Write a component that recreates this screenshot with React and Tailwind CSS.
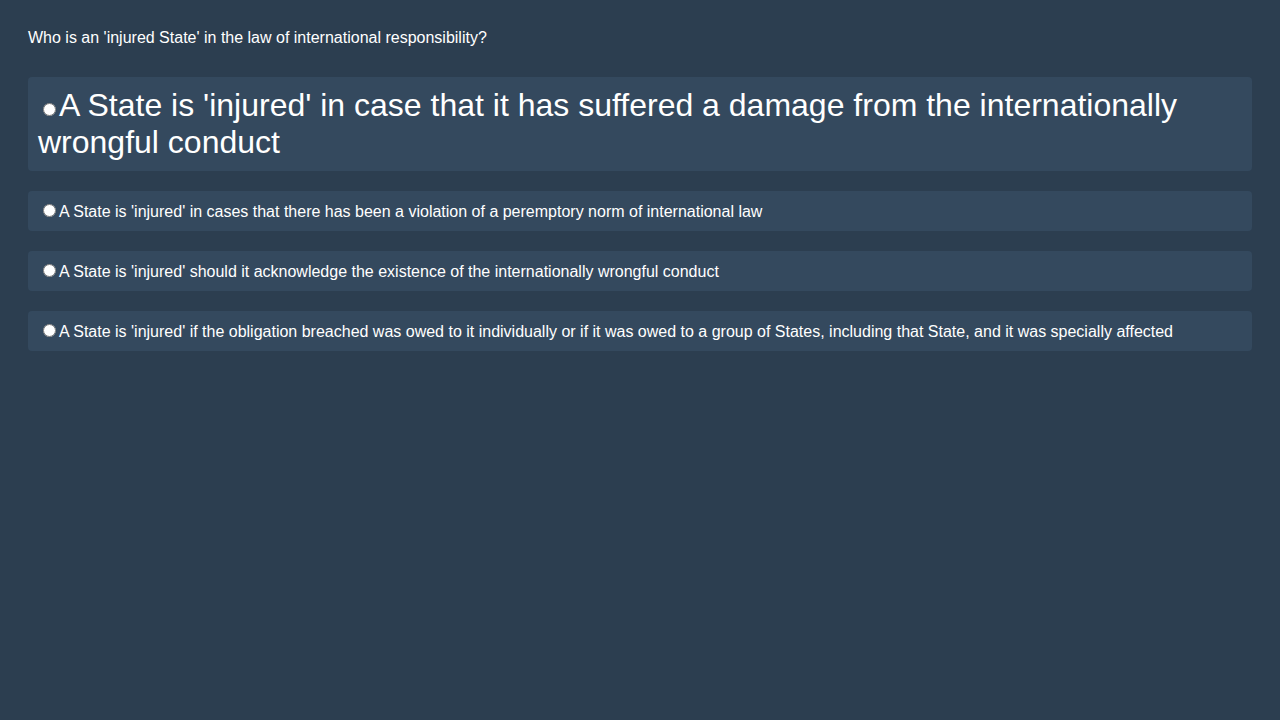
import React, { useState } from "react";

const options = [
  "A State is 'injured' in case that it has suffered a damage from the internationally wrongful conduct",
  "A State is 'injured' in cases that there has been a violation of a peremptory norm of international law",
  "A State is 'injured' should it acknowledge the existence of the internationally wrongful conduct",
  "A State is 'injured' if the obligation breached was owed to it individually or if it was owed to a group of States, including that State, and it was specially affected",
];

export default function App() {
  const [picked, setPicked] = useState(null);

  return (
    <div
      className="min-h-screen w-full bg-[#2c3e50] text-white px-[28px] pt-[29px]"
      style={{ fontFamily: '"Liberation Sans", Arial, sans-serif' }}
    >
      <p className="text-[16px] leading-[18px] mb-[30px]">
        Who is an 'injured State' in the law of international responsibility?
      </p>

      <div className="flex flex-col gap-[20px]">
        {options.map((opt, i) => (
          <label
            key={i}
            className={
              "block bg-[#34495e] rounded-[4px] p-[10px] cursor-pointer " +
              (i === 0 ? "text-[32px] leading-[37px]" : "text-[16px] leading-[19px]")
            }
          >
            <input
              type="radio"
              name="answer"
              checked={picked === i}
              onChange={() => setPicked(i)}
              className="ml-[5px] mr-[3px] mt-[3px] align-baseline"
            />
            {opt}
          </label>
        ))}
      </div>
    </div>
  );
}
